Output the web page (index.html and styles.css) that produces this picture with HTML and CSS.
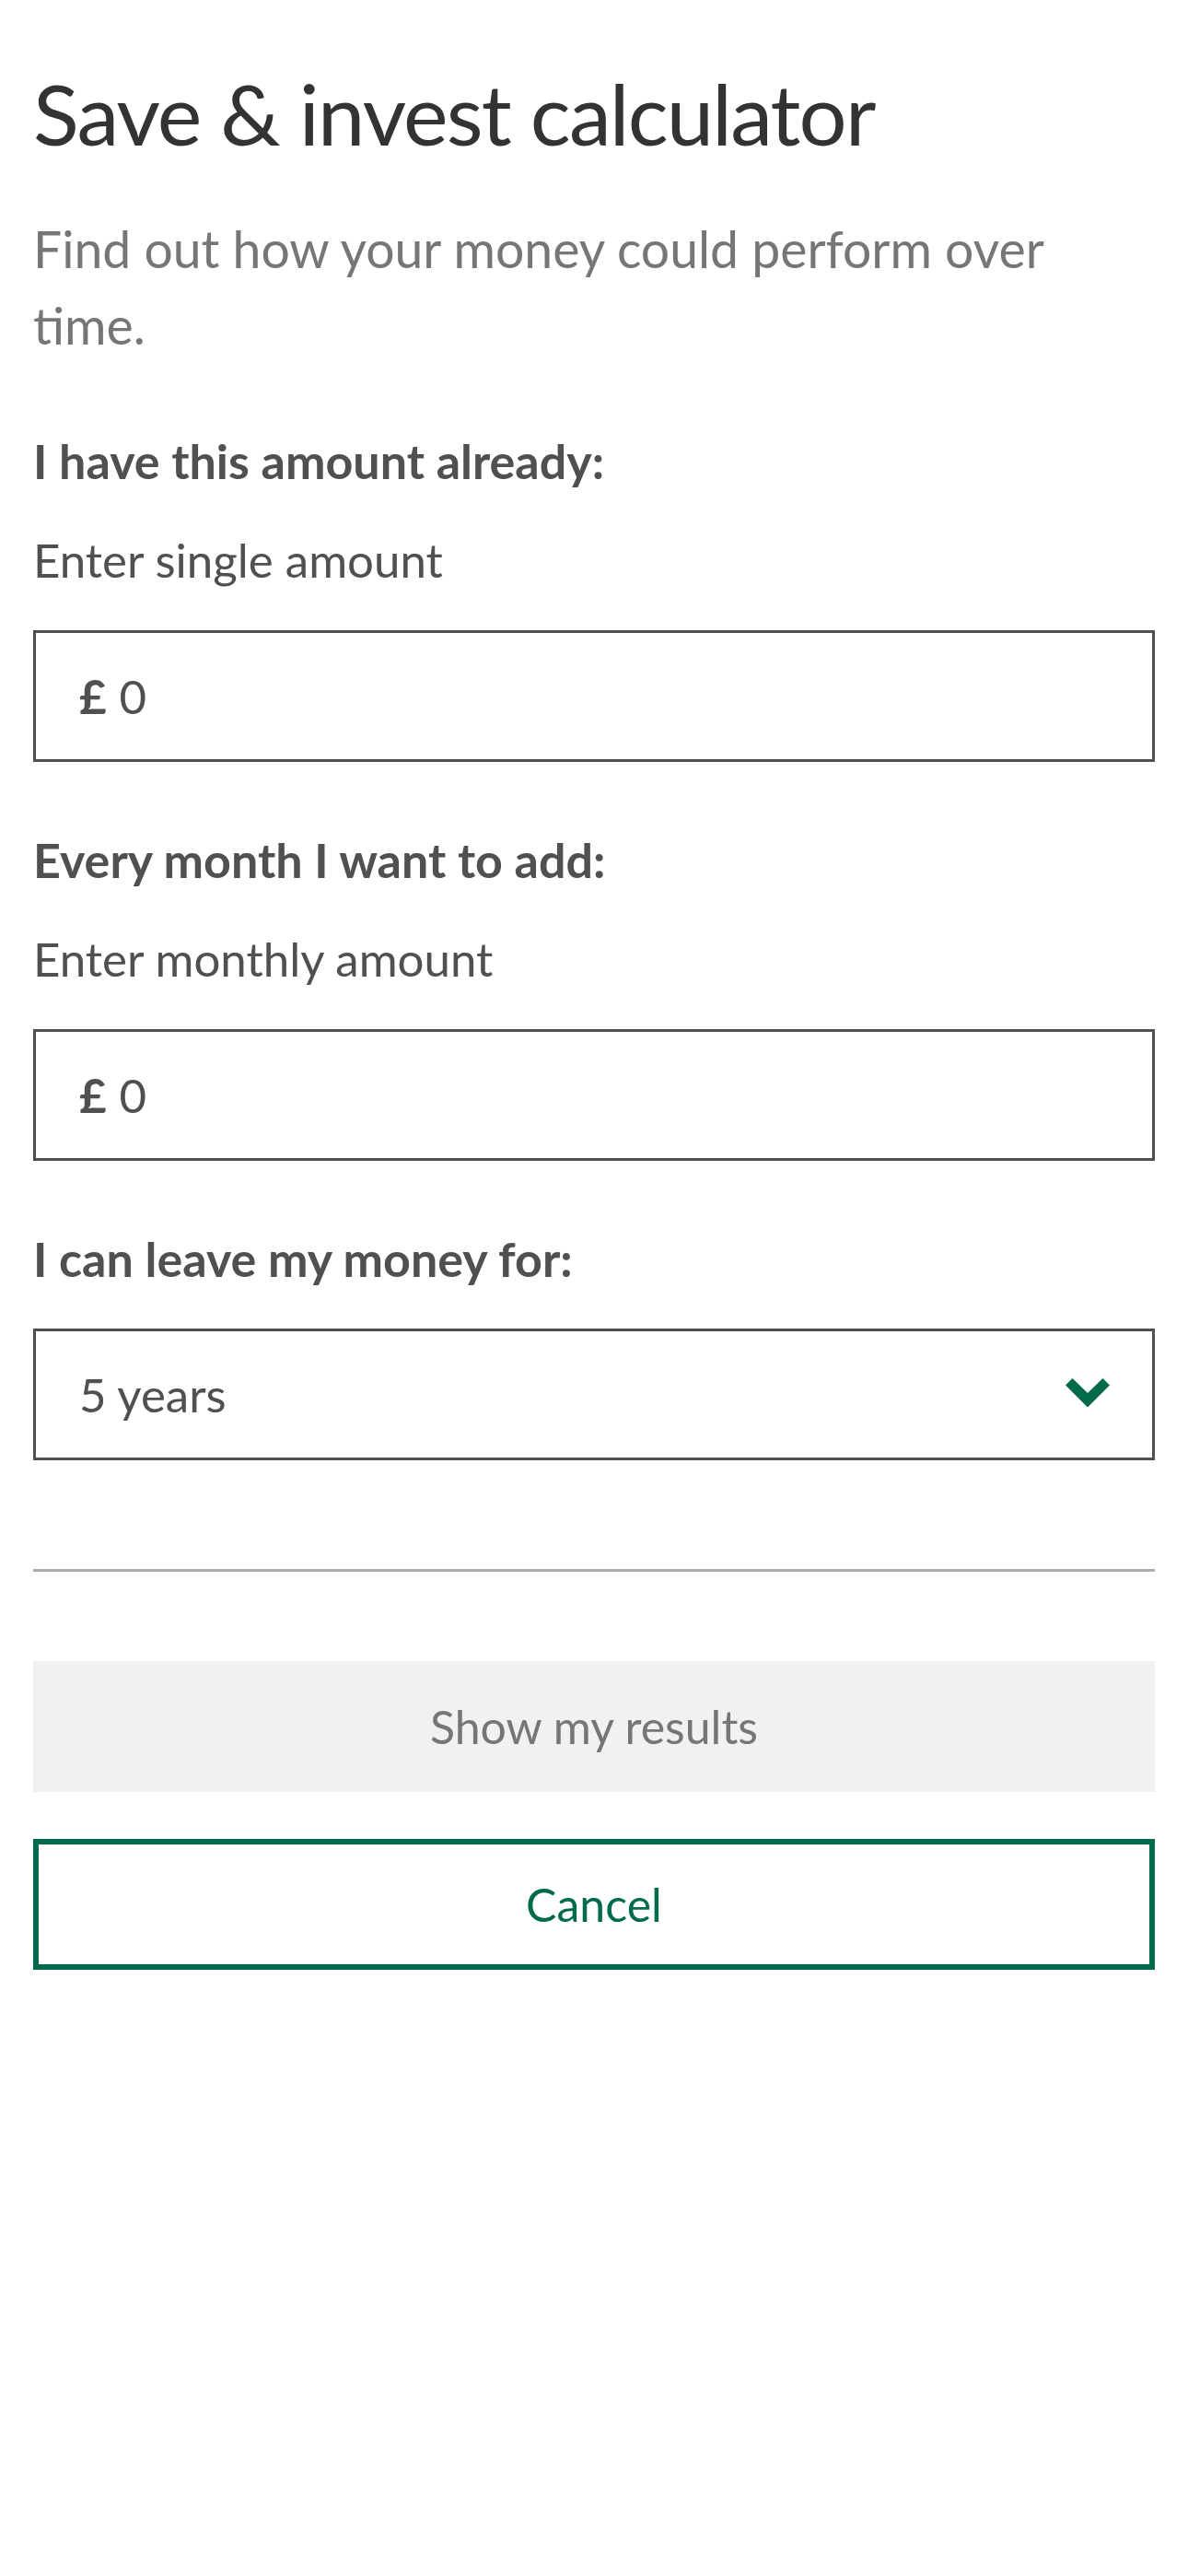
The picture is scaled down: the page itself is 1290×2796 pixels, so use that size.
FILE: index.html
```html
<!DOCTYPE html>
<html lang="en">
<head>
<meta charset="utf-8">
<title>Save &amp; invest calculator</title>
<link rel="stylesheet" href="styles.css">
</head>
<body>
<main class="calc">
  <h1 class="title">Save &amp; invest calculator</h1>
  <p class="intro">Find out how your money could perform over time.</p>

  <form class="form">
    <div class="field">
      <div class="label">I have this amount already:</div>
      <div class="hint">Enter single amount</div>
      <div class="input"><span class="currency">£</span><span class="value">0</span></div>
    </div>

    <div class="field">
      <div class="label">Every month I want to add:</div>
      <div class="hint">Enter monthly amount</div>
      <div class="input"><span class="currency">£</span><span class="value">0</span></div>
    </div>

    <div class="field">
      <div class="label">I can leave my money for:</div>
      <div class="input select">
        <span class="value">5 years</span>
        <svg class="chevron" viewBox="0 0 48 32" width="48" height="32" aria-hidden="true">
          <polygon points="0,7.5 7.5,0 24,16 40.5,0 48,7.5 24,31.5" fill="#006a4d"/>
        </svg>
      </div>
    </div>

    <hr class="divider">

    <div class="actions">
      <button type="button" class="btn btn-disabled">Show my results</button>
      <button type="button" class="btn btn-outline">Cancel</button>
    </div>
  </form>
</main>
</body>
</html>
```

FILE: styles.css
```css
* {
  box-sizing: border-box;
}

html, body {
  margin: 0;
  padding: 0;
  background: #ffffff;
}

body {
  font-family: Lato, "Open Sans", "Liberation Sans", sans-serif;
  color: #505050;
}

.calc {
  padding: 66px 36px 0;
}

.title {
  margin: 0;
  font-size: 92px;
  line-height: 114px;
  font-weight: 400;
  letter-spacing: -1.8px;
  color: #333333;
}

.intro {
  margin: 48px 0 0;
  font-size: 55.3px;
  line-height: 83px;
  color: #767676;
}

.form {
  display: flex;
  flex-direction: column;
}

.field {
  display: flex;
  flex-direction: column;
  gap: 44px;
  margin-top: 74px;
}

.label {
  font-size: 52px;
  line-height: 64px;
  font-weight: 700;
  color: #505050;
}

.hint {
  font-size: 51px;
  line-height: 64px;
  color: #505050;
}

.input {
  height: 143px;
  border: 3px solid #505050;
  display: flex;
  align-items: center;
  padding: 0 46px 0 47px;
  font-size: 51px;
  color: #505050;
}

.currency {
  font-weight: 700;
  margin-right: 14px;
}

.select {
  justify-content: space-between;
}

.chevron {
  display: block;
  margin-top: -4px;
}

.divider {
  margin: 118px 0 0;
  border: 0;
  height: 3px;
  background: #acacac;
}

.actions {
  display: flex;
  flex-direction: column;
  gap: 51px;
  margin-top: 97px;
}

.btn {
  height: 142px;
  width: 100%;
  font-family: inherit;
  font-size: 50px;
  border: 0;
  background: none;
  padding: 0;
  display: flex;
  align-items: center;
  justify-content: center;
}

.btn-disabled {
  background: #f1f1f1;
  color: #767676;
}

.btn-outline {
  border: 6px solid #006a4d;
  color: #006a4d;
  background: #ffffff;
}
```
